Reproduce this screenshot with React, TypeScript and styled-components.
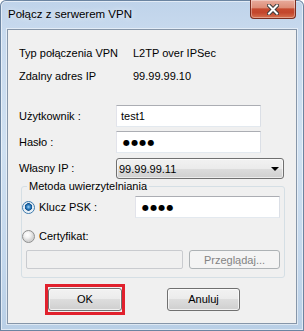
import React from 'react';
import styled, { createGlobalStyle } from 'styled-components';

const Global = createGlobalStyle`
  html, body { margin: 0; padding: 0; background: #fff; }
  body { font-family: "Liberation Sans", Arial, sans-serif; font-size: 11px; color: #000; }
`;

const Window = styled.div`
  width: 304px;
  height: 331px;
  box-sizing: border-box;
  display: flex;
  flex-direction: column;
  padding: 0 7px 7px 7px;
  background: linear-gradient(180deg, #bfd3ea 0%, #c8daee 10%, #cfe0f1 45%, #c3d7ec 80%, #b9cfe6 100%);
  box-shadow: inset 0 0 0 1px #6b84a1, inset 0 0 0 2px rgba(255,255,255,0.55);
  border-radius: 6px 6px 0 0;
`;

const TitleBar = styled.div`
  height: 29px;
  display: flex;
  align-items: flex-start;
  justify-content: space-between;
  flex-shrink: 0;
`;

const Title = styled.div`
  padding: 7px 0 0 1px;
  font-size: 11.5px;
  line-height: 15px;
  color: #000;
  text-shadow: 0 0 6px rgba(255,255,255,0.9);
`;

const CloseButton = styled.div`
  width: 46px;
  height: 19px;
  box-sizing: border-box;
  margin-right: 1px;
  display: flex;
  align-items: center;
  justify-content: center;
  border: 1px solid #7b2d1f;
  border-top: none;
  border-radius: 0 0 4px 4px;
  background: linear-gradient(180deg, #e8ab9c 0%, #dd8e78 42%, #c54a2f 50%, #c3462c 70%, #d6714f 100%);
  box-shadow: inset 0 0 0 1px rgba(255,255,255,0.35);
`;

const Client = styled.div`
  flex: 1;
  display: flex;
  flex-direction: column;
  background: #f0f0f0;
  border: 1px solid #8696a9;
  box-shadow: 0 0 0 1px rgba(255,255,255,0.5);
  padding: 16px 0 0 0;
`;

const InfoGrid = styled.div`
  display: grid;
  grid-template-columns: 114px 1fr;
  row-gap: 8px;
  padding-left: 11px;
  line-height: 15px;
`;

const FormGrid = styled.div`
  display: grid;
  grid-template-columns: 97px auto;
  grid-auto-rows: auto;
  row-gap: 4px;
  align-items: center;
  padding-left: 11px;
  margin-top: 21px;
`;

const Label = styled.div`
  line-height: 15px;
`;

const TextBox = styled.div<{ $w: number }>`
  width: ${p => p.$w}px;
  height: 22px;
  box-sizing: border-box;
  border: 1px solid;
  border-color: #abadb3 #dbdfe6 #e3e9ef #e2e3ea;
  background: #fff;
  padding: 0 4px;
  display: flex;
  align-items: center;
  line-height: 15px;
`;

const Dots = styled.span`
  font-family: "DejaVu Sans", sans-serif;
  font-size: 8px;
  letter-spacing: 1.2px;
  padding-left: 2px;
`;

const Combo = styled.div`
  width: 168px;
  height: 21px;
  margin-top: 1px;
  box-sizing: border-box;
  border: 1px solid #707070;
  border-radius: 3px;
  background: linear-gradient(180deg, #f2f2f2 0%, #ebebeb 50%, #dddddd 50%, #cfcfcf 100%);
  box-shadow: inset 0 0 0 1px rgba(255,255,255,0.6);
  display: flex;
  align-items: center;
  justify-content: space-between;
  padding: 0 4px 0 2px;
`;

const Arrow = styled.span`
  width: 0;
  height: 0;
  border-left: 4px solid transparent;
  border-right: 4px solid transparent;
  border-top: 4px solid #000;
`;

const Group = styled.fieldset`
  margin: 1px 11px 0 13px;
  padding: 0 0 8px 0;
  border: 1px solid #d5dfe5;
  border-radius: 3px;
  display: flex;
  flex-direction: column;
`;

const Legend = styled.legend`
  margin-left: 5px;
  padding: 0 2px;
  line-height: 13px;
`;

const GroupRow = styled.div<{ $mt: number; $indent?: number }>`
  display: flex;
  align-items: center;
  margin-top: ${p => p.$mt}px;
  padding-left: ${p => p.$indent ?? 0}px;
`;

const RadioLabel = styled.label`
  display: flex;
  align-items: center;
  gap: 4px;
  width: 113px;
  line-height: 15px;
`;

const Radio = styled.span<{ $checked?: boolean }>`
  width: 13px;
  height: 13px;
  box-sizing: border-box;
  border-radius: 50%;
  border: 1px solid ${p => (p.$checked ? '#3d7bad' : '#8e8f8f')};
  background: ${p =>
    p.$checked
      ? 'radial-gradient(circle at 50% 45%, #9fd2f7 0, #2f7fc0 2px, #0f4e8a 3.5px, #dfe9f2 4px, #f4f7fa 6px)'
      : 'radial-gradient(circle at 40% 35%, #ffffff 0, #f2f2f2 3px, #d4d4d4 6px)'};
  flex-shrink: 0;
`;

const DisabledBox = styled.div`
  width: 157px;
  height: 19px;
  box-sizing: border-box;
  border: 1px solid #c9cbcf;
  border-radius: 2px;
  background: #f0f0f0;
`;

const DisabledButton = styled.div`
  width: 91px;
  height: 19px;
  margin-left: 6px;
  box-sizing: border-box;
  border: 1px solid #adb2b5;
  border-radius: 3px;
  background: #f4f4f4;
  color: #838383;
  display: flex;
  align-items: center;
  justify-content: center;
`;

const ButtonRow = styled.div`
  display: flex;
  align-items: center;
  padding-left: 37px;
  margin-top: 6px;
`;

const Highlight = styled.div`
  border: 3px solid #e1212d;
  padding: 1px 0;
`;

const Button = styled.div<{ $w: number; $ml?: number }>`
  width: ${p => p.$w}px;
  height: 23px;
  margin-left: ${p => p.$ml ?? 0}px;
  box-sizing: border-box;
  border: 1px solid #707070;
  border-radius: 3px;
  background: linear-gradient(180deg, #f2f2f2 0%, #ebebeb 50%, #dddddd 50%, #cfcfcf 100%);
  box-shadow: inset 0 0 0 1px rgba(255,255,255,0.7);
  display: flex;
  align-items: center;
  justify-content: center;
  line-height: 15px;
`;

export default function App() {
  return (
    <>
      <Global />
      <Window>
        <TitleBar>
          <Title>Połącz z serwerem VPN</Title>
          <CloseButton>
            <svg width="12" height="11" viewBox="0 0 12 11">
              <path d="M2 1.5 L10 9.5 M10 1.5 L2 9.5" stroke="#3a3a3a" strokeWidth="4" strokeLinecap="square" />
              <path d="M2 1.5 L10 9.5 M10 1.5 L2 9.5" stroke="#ffffff" strokeWidth="2" strokeLinecap="square" />
            </svg>
          </CloseButton>
        </TitleBar>
        <Client>
          <InfoGrid>
            <div>Typ połączenia VPN</div>
            <div>L2TP over IPSec</div>
            <div>Zdalny adres IP</div>
            <div>99.99.99.10</div>
          </InfoGrid>
          <FormGrid>
            <Label>Użytkownik :</Label>
            <TextBox $w={145}>test1</TextBox>
            <Label>Hasło :</Label>
            <TextBox $w={145}><Dots>●●●●</Dots></TextBox>
            <Label>Własny IP :</Label>
            <Combo>
              <span>99.99.99.11</span>
              <Arrow />
            </Combo>
          </FormGrid>
          <Group>
            <Legend>Metoda uwierzytelniania</Legend>
            <GroupRow $mt={3}>
              <RadioLabel>
                <Radio $checked />
                Klucz PSK :
              </RadioLabel>
              <TextBox $w={145}><Dots>●●●●</Dots></TextBox>
            </GroupRow>
            <GroupRow $mt={11}>
              <RadioLabel>
                <Radio />
                Certyfikat:
              </RadioLabel>
            </GroupRow>
            <GroupRow $mt={6} $indent={4}>
              <DisabledBox />
              <DisabledButton>Przeglądaj...</DisabledButton>
            </GroupRow>
          </Group>
          <ButtonRow>
            <Highlight>
              <Button $w={74}>OK</Button>
            </Highlight>
            <Button $w={73} $ml={42}>Anuluj</Button>
          </ButtonRow>
        </Client>
      </Window>
    </>
  );
}
